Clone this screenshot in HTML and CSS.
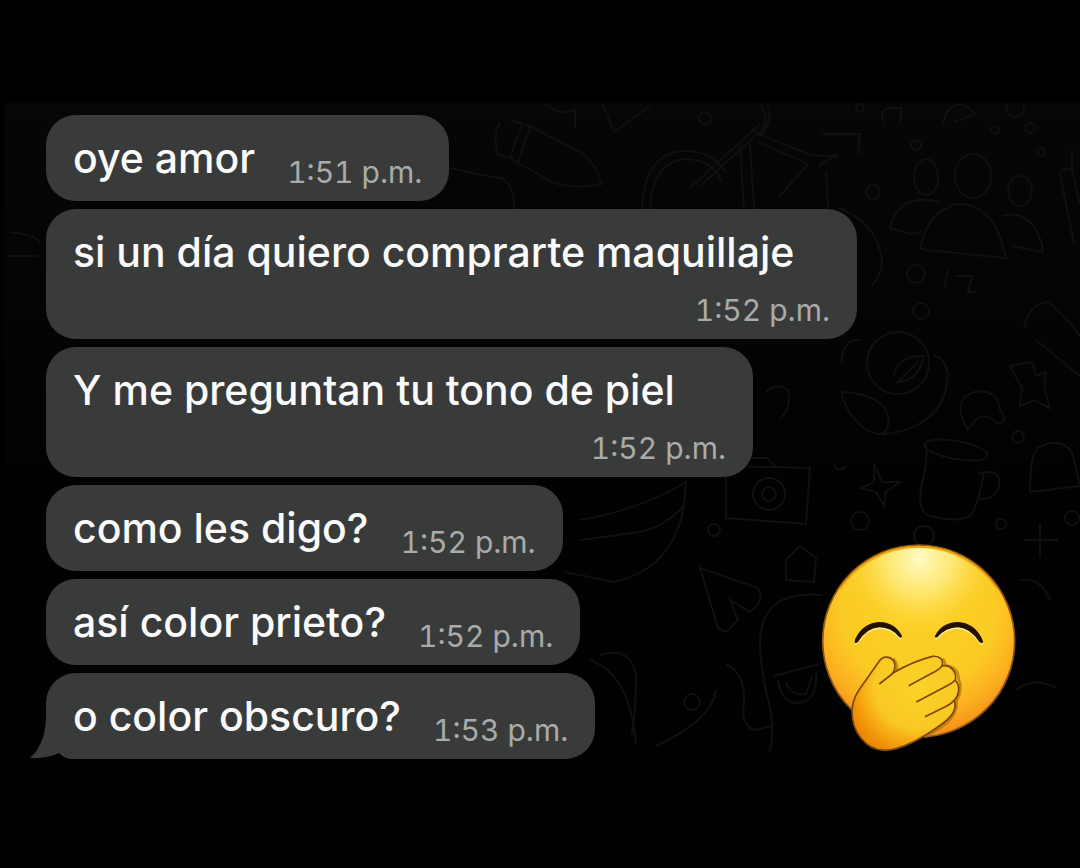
FILE: index.html
```html
<!DOCTYPE html>
<html lang="es">
<head>
    <meta charset="UTF-8">
    <meta name="viewport" content="width=device-width, initial-scale=1.0">
    <title>Chat</title>
    <link rel="stylesheet" href="styles.css">
</head>
<body>
    <main class="chat">
        <!-- Doodle wallpaper -->
        <svg class="wallpaper" viewBox="0 103 1080 662" preserveAspectRatio="xMaxYMin slice" aria-hidden="true">
            <!-- Crayon, star and bicycle -->
            <path d="M522 124l-12 34M530 127l-12 36M500 122q-8 14-2 32l12 4M510 120l20 6 50 26q14 8 22 32-28 6-50-2l-42-24M545 104q14 12 30 6v18M602 104l12 28 36-26M442 166q40 10 60 12 14 10 12 34"/>
            <path d="M642 209q2-56 42-58 30 0 42 22M650 209q2-46 34-50 30 0 38 24M690 188l70-64M700 186l60-54M744 209l-4-64M754 209l-4-66M754 132l54 22q20 4 30 0M758 142l50 22-30 34M818 168q8-10 20-12M822 134h38l-2 20M758 102q14 14 2 30M766 102q10 14-6 34M826 172l2 36M838 208q40 14 44 54 0 10-10 24"/>
            <circle cx="705" cy="118" r="6"/><circle cx="860" cy="108" r="4"/><circle cx="916" cy="145" r="5"/><circle cx="873" cy="192" r="7"/>
            <path d="M884 122q-6-12 6-14l12 0-2 14M942 126q4-22 20-22l14 10-22 8"/>
            <circle cx="1015" cy="108" r="9"/><circle cx="1030" cy="128" r="5"/><circle cx="1041" cy="152" r="4"/><circle cx="995" cy="130" r="4"/>
            <!-- Group of people -->
            <ellipse cx="926" cy="177" rx="12" ry="18"/><ellipse cx="973" cy="176" rx="18" ry="22"/><ellipse cx="1020" cy="191" rx="12" ry="15"/>
            <path d="M920 248q8-36 36-44 36-2 48 46l2 8-80-8zM890 228q8-36 50-26M890 228l20 6 12-2M1002 216q28-8 40 28v8l-30-6M1060 174q4-8 12-4l8 34M1060 174l14 70M1072 150v20"/>
            <circle cx="916" cy="274" r="9"/><circle cx="921" cy="311" r="8"/><path d="M948 270l-4 18M956 276h16l-4 16h8M1024 328q4-24 24-26 14 10 32 34M1036 340l44 36"/>
            <!-- Fruit, cloud, mug and bell -->
            <path d="M842 362q0-24 20-22M842 390q-2 10 12 28 14 18 32 16 60-8 62-60-4-18-14-18M842 392q40 2 46 24 2 16-8 18"/>
            <circle cx="898" cy="363" r="31"/><path d="M894 376q2-20 30-20-4 18-16 24l-10 2 20-20"/>
            <path d="M766 392q10-10 22-2 4 20-8 28M968 430q-18-30 6-38 24-4 26 18 10 10-2 14-14-14-24-2zM1010 366l22-4 4 14 10-4-2 14 6 22-16-8-14 6 2-18z"/>
            <ellipse cx="956" cy="450" rx="32" ry="9" transform="rotate(10 956 450)"/>
            <path d="M926 444q2 20-4 38-6 30 8 34 30 8 42-2 6-10 12-42M978 474q26-8 20 16-8 12-20 8M1030 492q0-38 8-44 22-12 34 4l8 34M1030 492l50-6M874 464l8 18 18 0-14 10-2 14-8-14-14-4 12-6zM834 464q4 10 12 2"/>
            <circle cx="860" cy="521" r="9"/><circle cx="924" cy="536" r="10"/><circle cx="1001" cy="524" r="5"/><circle cx="1072" cy="518" r="7"/><circle cx="1018" cy="437" r="6"/>
            <path d="M1024 540h34M1040 524v34"/>
            <!-- Camera, leaf bowl, arrow and face with glasses -->
            <path d="M726 466l84 2-4 56-80-6zM736 466l8-8h24l8 10"/><circle cx="769" cy="494" r="16"/><circle cx="769" cy="494" r="7"/>
            <path d="M580 520q60-10 106-38-2 84-72 100l-50-10M580 540l60-8q26-6 44-26M700 568l58 20q8 12-8 24l-20-12 8 20-12 12-8-4zM786 560l14-14 16 12-2 24-28-2z"/>
            <path d="M822 595q-60-6-62 46 0 20 6 50 10 34 4 60M774 676l46-12M778 680q4 28 26 22 14-6 12-32M786 682q4 14 20 12l6-18M600 655q30-10 36 20 0 30-4 60M590 660q40 14 46 84M726 664q20 10 18 40-4 20 10 26l18-4M716 690q-4 30-60 56"/>
            <circle cx="714" cy="530" r="6"/><circle cx="692" cy="702" r="8"/>
            <path d="M10 232q30 4 30 12M8 256h30M1020 580q20-4 30 20M1016 690q18-14 40-2"/>
        </svg>

        <!-- Message list -->
        <div class="messages">
            <div class="bubble">
                <span class="text">oye amor</span>
                <time class="time" datetime="13:51">1:51 p.m.</time>
            </div>
            <div class="bubble stacked wide">
                <span class="text">si un día quiero comprarte maquillaje</span>
                <time class="time" datetime="13:52">1:52 p.m.</time>
            </div>
            <div class="bubble stacked medium">
                <span class="text">Y me preguntan tu tono de piel</span>
                <time class="time" datetime="13:52">1:52 p.m.</time>
            </div>
            <div class="bubble">
                <span class="text">como les digo?</span>
                <time class="time" datetime="13:52">1:52 p.m.</time>
            </div>
            <div class="bubble">
                <span class="text">así color prieto?</span>
                <time class="time" datetime="13:52">1:52 p.m.</time>
            </div>
            <div class="bubble last">
                <svg class="tail" viewBox="0 0 40 48" aria-hidden="true">
                    <path d="M16 0Q17 32 0 47Q16 48 29 42Q34 47 40 48V0Z"/>
                </svg>
                <span class="text">o color obscuro?</span>
                <time class="time" datetime="13:53">1:53 p.m.</time>
            </div>
        </div>

        <!-- Emoji sticker -->
        <svg class="emoji" viewBox="60 36 600 630" role="img" aria-label="Cara con la mano sobre la boca">
            <defs>
                <radialGradient id="face" gradientUnits="userSpaceOnUse" cx="356" cy="240" r="370">
                    <stop offset="0" stop-color="#fbd025"/>
                    <stop offset="0.62" stop-color="#fbcb24"/>
                    <stop offset="0.85" stop-color="#fbb020"/>
                    <stop offset="1" stop-color="#f7931b"/>
                </radialGradient>
                <radialGradient id="shine" gradientUnits="userSpaceOnUse" cx="360" cy="85" r="240">
                    <stop offset="0" stop-color="#fffbc8"/>
                    <stop offset="0.45" stop-color="#fff08a" stop-opacity="0.7"/>
                    <stop offset="1" stop-color="#fbd025" stop-opacity="0"/>
                </radialGradient>
                <radialGradient id="hand" gradientUnits="userSpaceOnUse" cx="350" cy="470" r="210">
                    <stop offset="0" stop-color="#fbd328"/>
                    <stop offset="0.6" stop-color="#fac824"/>
                    <stop offset="0.82" stop-color="#f5a510"/>
                    <stop offset="1" stop-color="#ee8a05"/>
                </radialGradient>
            </defs>
            <circle cx="356" cy="333" r="288" fill="url(#face)" stroke="#8f560b" stroke-width="5"/>
            <circle cx="356" cy="333" r="280" fill="url(#shine)"/>
            <path d="M120 176A284 284 0 0 1 592 176" fill="none" stroke="#e99b11" stroke-width="6" opacity="0.8"/>
            <!-- Closed eyes -->
            <g fill="#fff4a0" transform="translate(0 4)">
                <path d="M168 341Q161 338 166 326Q190 278 238 276Q286 278 306 320Q304 327 298 322Q274 292 238 292Q200 294 174 336Z"/>
                <path d="M545 341Q552 338 546 326Q522 278 474 276Q424 278 405 320Q406 327 412 322Q438 292 474 292Q510 294 538 336Z"/>
            </g>
            <g fill="#241100">
                <path d="M168 340Q161 338 166 326Q190 278 238 276Q286 278 306 318Q307 326 298 322Q274 292 238 292Q200 294 174 336Z"/>
                <path d="M545 340Q552 338 546 326Q522 278 474 276Q424 278 405 318Q404 326 412 322Q438 292 474 292Q510 294 538 336Z"/>
            </g>
            <!-- Hand shadow -->
            <path d="M280 386Q296 402 288 428M428 386Q438 396 434 406Q476 410 476 448Q490 474 470 512Q474 550 440 578Q410 604 374 621" fill="none" stroke="#a66a0b" stroke-width="8" opacity="0.65"/>
            <!-- Hand -->
            <path d="M156 545C156 510 170 490 188 464L238 393C248 378 268 378 279 390C288 402 286 418 277 430C316 407 356 389 398 379C420 377 432 390 426 408C450 402 472 424 466 452C480 464 480 492 463 511C472 538 456 560 430 579C380 616 310 660 254 661C196 660 156 604 156 545Z" fill="url(#hand)" stroke="#7c4708" stroke-width="5" stroke-linejoin="round"/>
            <path d="M238 462L280 429M326 467L404 425Q422 416 427 405M349 516L430 473Q458 460 465 450M375 560L436 530Q456 520 463 510" fill="none" stroke="#7c4708" stroke-width="5"/>
        </svg>
    </main>
</body>
</html>
```
FILE: styles.css
```css
/* Basic page settings */
* {
    box-sizing: border-box;
}

body {
    margin: 0;
    min-height: 100vh;
    display: flex;
    flex-direction: column;
    justify-content: center;
    background: #000;
    font-family: Inter, "Liberation Sans", sans-serif;
}

/* Chat area */
.chat {
    position: relative;
    overflow: hidden;
    padding: 12px 46px 6px 42px;
    border-left: 4px solid #000;
    background: linear-gradient(#050706, #010101 60%, #010101);
}

/* Doodles behind the messages */
.wallpaper {
    position: absolute;
    inset: 0;
    width: 100%;
    height: 100%;
    fill: none;
    stroke: #0f1110;
    stroke-width: 2;
}

.messages {
    position: relative;
    display: flex;
    flex-direction: column;
    align-items: flex-start;
    gap: 8px;
}

/* Message bubble */
.bubble {
    position: relative;
    display: flex;
    align-items: flex-end;
    gap: 32px;
    max-width: 100%;
    padding: 13px 27px;
    border-radius: 30px;
    background: #393b3a;
}

/* Long messages with the time on its own row */
.stacked {
    flex-direction: column;
    align-items: stretch;
    gap: 12px;
}

.wide {
    width: 811px;
}

.medium {
    width: 707px;
}

.text {
    color: #fafafa;
    font-size: 41px;
    font-weight: 500;
    line-height: 60px;
}

.time {
    color: #a9abaa;
    font-size: 30px;
    font-variant-numeric: tabular-nums;
    line-height: 32px;
    text-align: right;
    white-space: nowrap;
}

/* Tail of the last bubble */
.tail {
    position: absolute;
    left: -16px;
    bottom: 0;
    width: 40px;
    height: 48px;
    fill: #393b3a;
}

.last {
    border-bottom-left-radius: 0;
    background: linear-gradient(#393b3a, #393b3a) 24px 0 no-repeat, linear-gradient(#393b3a, #393b3a) 0 0 / 24px 40px no-repeat;
}

/* Sticker over the conversation */
.emoji {
    position: absolute;
    right: 60px;
    bottom: 13px;
    width: 200px;
    height: 210px;
}
```
